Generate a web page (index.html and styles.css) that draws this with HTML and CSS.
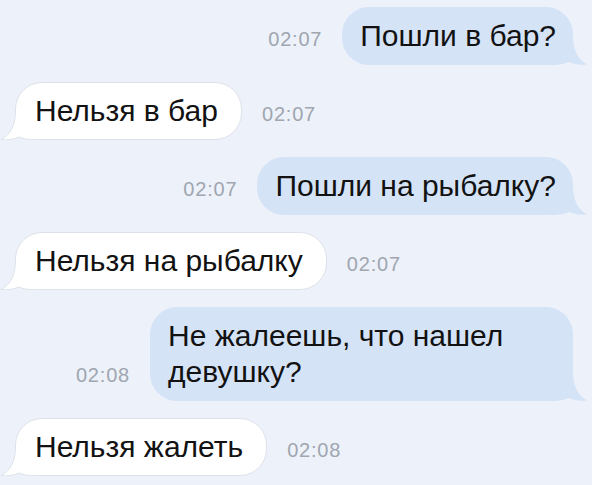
FILE: index.html
```html
<!DOCTYPE html>
<html lang="ru">
<head>
<meta charset="utf-8">
<title>Чат</title>
<link rel="stylesheet" href="styles.css">
</head>
<body>
<div class="chat">
  <div class="row out">
    <span class="time">02:07</span>
    <div class="bubble"><svg class="tail" viewBox="0 0 41 30" width="41" height="30"><path class="tail-fill" d="M0 30 L0 0 L26 0 C26 14 30 24 40 29.5 C33 30.5 27 29 22 27 C18 29 12 30 6 30 Z"/></svg><span class="text">Пошли в бар?</span></div>
  </div>
  <div class="row in">
    <div class="bubble"><svg class="tail" viewBox="0 0 41 30" width="41" height="30"><path class="tail-fill" d="M0 30 L0 0 L26 0 C26 14 30 24 40 29.5 C33 30.5 27 29 22 27 C18 29 12 30 6 30 Z"/><path class="tail-line" d="M25.5 0 C25.5 14 29.5 24 40 29.5 C33 30.5 27 29 22 27 C18 29 12 30 0 29.5"/></svg><span class="text">Нельзя в бар</span></div>
    <span class="time">02:07</span>
  </div>
  <div class="row out">
    <span class="time">02:07</span>
    <div class="bubble"><svg class="tail" viewBox="0 0 41 30" width="41" height="30"><path class="tail-fill" d="M0 30 L0 0 L26 0 C26 14 30 24 40 29.5 C33 30.5 27 29 22 27 C18 29 12 30 6 30 Z"/></svg><span class="text">Пошли на рыбалку?</span></div>
  </div>
  <div class="row in">
    <div class="bubble"><svg class="tail" viewBox="0 0 41 30" width="41" height="30"><path class="tail-fill" d="M0 30 L0 0 L26 0 C26 14 30 24 40 29.5 C33 30.5 27 29 22 27 C18 29 12 30 6 30 Z"/><path class="tail-line" d="M25.5 0 C25.5 14 29.5 24 40 29.5 C33 30.5 27 29 22 27 C18 29 12 30 0 29.5"/></svg><span class="text">Нельзя на рыбалку</span></div>
    <span class="time">02:07</span>
  </div>
  <div class="row out">
    <span class="time">02:08</span>
    <div class="bubble"><svg class="tail" viewBox="0 0 41 30" width="41" height="30"><path class="tail-fill" d="M0 30 L0 0 L26 0 C26 14 30 24 40 29.5 C33 30.5 27 29 22 27 C18 29 12 30 6 30 Z"/></svg><span class="text">Не жалеешь, что нашел девушку?</span></div>
  </div>
  <div class="row in">
    <div class="bubble"><svg class="tail" viewBox="0 0 41 30" width="41" height="30"><path class="tail-fill" d="M0 30 L0 0 L26 0 C26 14 30 24 40 29.5 C33 30.5 27 29 22 27 C18 29 12 30 6 30 Z"/><path class="tail-line" d="M25.5 0 C25.5 14 29.5 24 40 29.5 C33 30.5 27 29 22 27 C18 29 12 30 0 29.5"/></svg><span class="text">Нельзя жалеть</span></div>
    <span class="time">02:08</span>
  </div>
</div>
</body>
</html>
```

FILE: styles.css
```css
html, body {
  margin: 0;
  padding: 0;
  background: #edf1f9;
}

body {
  width: 592px;
  height: 485px;
  overflow: hidden;
  font-family: "Liberation Sans", Arial, sans-serif;
}

.chat {
  display: flex;
  flex-direction: column;
  gap: 17px;
  padding: 7px 0 0 0;
}

.row {
  display: flex;
  align-items: last baseline;
}

.row.out {
  justify-content: flex-end;
  gap: 20px;
  padding-right: 19px;
}

.row.in {
  justify-content: flex-start;
  gap: 20px;
  padding-left: 15px;
}

.bubble {
  position: relative;
  box-sizing: border-box;
  max-width: 423px;
  font-size: 30px;
  line-height: 36px;
  color: #121212;
  padding: 11px 17px 11px 18px;
  border-radius: 27px;
}

.text {
  position: relative;
}

.row.out .bubble {
  background: #d5e3f7;
}

.row.in .bubble {
  background: #ffffff;
  padding: 10px 23px 10px 19px;
  border: 1px solid #dde2ea;
}

.tail {
  position: absolute;
  bottom: 0;
  right: -15px;
  display: block;
}

.row.out .tail-fill {
  fill: #d5e3f7;
}

.row.in .tail {
  right: auto;
  left: -16px;
  bottom: -1px;
  transform: scaleX(-1);
}

.row.in .tail-fill {
  fill: #ffffff;
}

.tail-line {
  fill: none;
  stroke: #dde2ea;
  stroke-width: 1;
}

.time {
  font-size: 20px;
  color: #9fa6b0;
  letter-spacing: 0.8px;
}
```
